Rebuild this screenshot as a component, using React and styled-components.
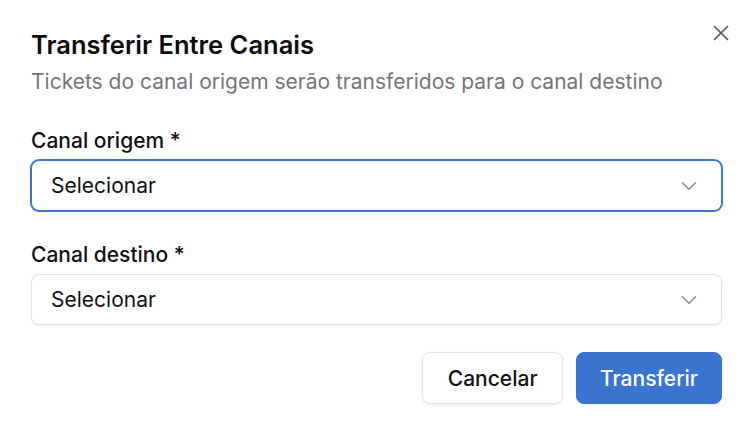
import React from "react";
import styled, { createGlobalStyle } from "styled-components";

const GlobalStyle = createGlobalStyle`
  html, body {
    margin: 0;
    padding: 0;
    background: #ffffff;
  }
  body {
    font-family: Inter, "Noto Sans", "Liberation Sans", sans-serif;
    color: #111111;
  }
`;

const Dialog = styled.div`
  position: relative;
  width: 746px;
  height: 424px;
  box-sizing: border-box;
  padding: 29px 24px 0 31px;
  background: #ffffff;
`;

const CloseButton = styled.button`
  position: absolute;
  top: 22px;
  right: 14px;
  width: 22px;
  height: 22px;
  padding: 0;
  border: none;
  background: none;
  display: flex;
  align-items: center;
  justify-content: center;
  color: #57575c;
  cursor: pointer;
`;

const Title = styled.h2`
  margin: 0;
  font-size: 25.5px;
  line-height: 32px;
  font-weight: 600;
  color: #0c0c0f;
`;

const Subtitle = styled.p`
  margin: 7px 0 0;
  font-size: 21px;
  line-height: 28px;
  color: #74747d;
`;

const Field = styled.div`
  display: flex;
  flex-direction: column;
  gap: 5px;
  margin-top: ${(p) => p.$top}px;
`;

const Label = styled.label`
  font-size: 21px;
  line-height: 28px;
  font-weight: 500;
  color: #111111;
`;

const Select = styled.div`
  height: 51px;
  box-sizing: border-box;
  display: flex;
  align-items: center;
  justify-content: space-between;
  padding: 0 24px 0 19px;
  border-radius: 8px;
  border: 1px solid ${(p) => (p.$focused ? "#3b77d2" : "#e2e2e6")};
  box-shadow: ${(p) =>
    p.$focused
      ? "0 0 0 1px #3b77d2, 0 1px 3px rgba(0, 0, 0, 0.08)"
      : "0 1px 2px rgba(0, 0, 0, 0.07)"};
  font-size: 21px;
  color: #111111;
  background: #ffffff;
`;

const Chevron = styled.svg`
  width: 16px;
  height: 10px;
  color: #8a8a90;
`;

const Actions = styled.div`
  display: flex;
  justify-content: flex-end;
  gap: 13px;
  margin-top: 27px;
`;

const Button = styled.button`
  height: 52px;
  box-sizing: border-box;
  padding: 0 ${(p) => (p.$primary ? 23 : 24.5)}px;
  border-radius: 8px;
  font-family: inherit;
  font-size: 21px;
  font-weight: 500;
  cursor: pointer;
  border: ${(p) => (p.$primary ? "1px solid #3a74cf" : "1.5px solid #e3e3e6")};
  background: ${(p) => (p.$primary ? "#3a74cf" : "#ffffff")};
  color: ${(p) => (p.$primary ? "#ffffff" : "#111111")};
  box-shadow: 0 1px 3px rgba(0, 0, 0, 0.08);
`;

const ChevronDown = () => (
  <Chevron viewBox="0 0 16 10" fill="none" stroke="currentColor" strokeWidth="1.6" strokeLinecap="round" strokeLinejoin="round">
    <path d="M1.5 1.8L8 8.2l6.5-6.4" />
  </Chevron>
);

export default function App() {
  return (
    <>
      <GlobalStyle />
      <Dialog>
        <CloseButton aria-label="Fechar">
          <svg width="16" height="16" viewBox="0 0 16 16" fill="none" stroke="currentColor" strokeWidth="1.7" strokeLinecap="round">
            <path d="M1.5 1.5l13 13M14.5 1.5l-13 13" />
          </svg>
        </CloseButton>
        <Title>Transferir Entre Canais</Title>
        <Subtitle>Tickets do canal origem serão transferidos para o canal destino</Subtitle>
        <Field $top={31}>
          <Label>Canal origem *</Label>
          <Select $focused>
            <span>Selecionar</span>
            <ChevronDown />
          </Select>
        </Field>
        <Field $top={30}>
          <Label>Canal destino *</Label>
          <Select>
            <span>Selecionar</span>
            <ChevronDown />
          </Select>
        </Field>
        <Actions>
          <Button>Cancelar</Button>
          <Button $primary>Transferir</Button>
        </Actions>
      </Dialog>
    </>
  );
}
